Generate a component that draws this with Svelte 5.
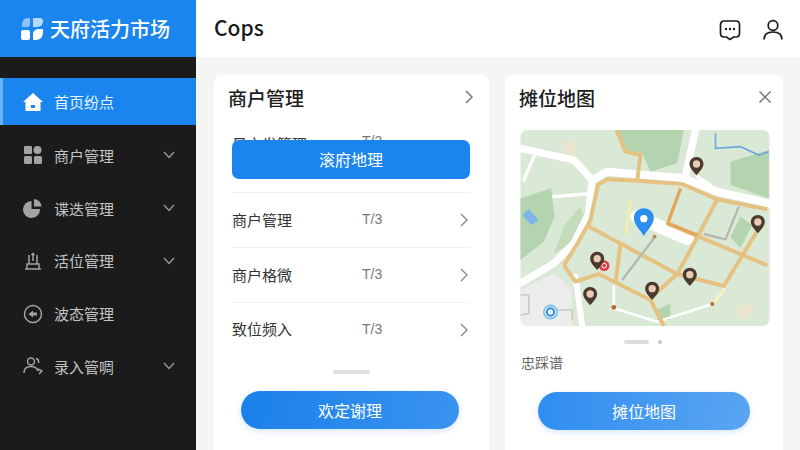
<script>
	const navItems = [
		{ label: '商户管理', icon: 'grid', arrow: true },
		{ label: '谍迭管理', icon: 'pie', arrow: true },
		{ label: '活位管理', icon: 'stall', arrow: true },
		{ label: '波态管理', icon: 'back', arrow: false },
		{ label: '录入管啁', icon: 'users', arrow: true }
	];

	const rows = [
		{ label: '商户管理', value: 'T/3' },
		{ label: '商户格微', value: 'T/3' },
		{ label: '致位频入', value: 'T/3' }
	];

	// map coordinates, same scale for every overlay
	const brownPins = [
		[558, 138],
		[742, 312],
		[260, 422],
		[538, 470],
		[425, 512],
		[239, 528]
	];

	const routes = [
		'M160 436 L200 372 L240 300 L262 195 L290 178 L380 182 L515 192 L620 238 L770 268',
		'M232 318 L500 462 L640 498 L742 330',
		'M160 436 L195 485 L265 462 L420 540 L460 618',
		'M470 310 L770 436',
		'M620 238 L540 390 L500 462 L425 530',
		'M330 370 L315 490',
		'M380 182 L390 105 L345 95 L318 30'
	];
</script>

<div class="app">
	<aside class="sidebar">
		<div class="brand">
			<svg class="logo" viewBox="0 0 22 23" width="22" height="23">
				<path d="M1 8c0-4 2-7 6-7h2v6c0 2-1 3-3 3H1z" fill="#8cc4f5" />
				<path d="M12 1h7c2 0 3 1 3 3 0 3-2 6-6 6h-4z" fill="#b5daf8" />
				<rect x="0" y="13" width="9" height="10" rx="2" fill="#fff" />
				<path d="M12 23V17c0-3 3-5 6-5h4v3c0 5-3 8-7 8z" fill="#fff" />
			</svg>
			<span>天府活力市场</span>
		</div>

		<nav>
			<a class="item active" href="#home">
				<svg viewBox="0 0 20 20" width="20" height="20">
					<path
						d="M10 1 L20 10 L17.5 10 L17.5 19 L2.500 19 L2.500 10 L0 10 Z M8 13 V16 H12 V13 Z"
						fill="#fff"
						fill-rule="evenodd"
					/>
				</svg>
				<span>首页纷点</span>
			</a>
			{#each navItems as item}
				<a class="item" href="#item">
					<svg viewBox="0 0 20 20" width="20" height="20" class="icon">
						{#if item.icon === 'grid'}
							<rect x="1" y="1" width="8" height="8" rx="1" fill="currentColor" />
							<circle cx="14.500" cy="5" r="4" fill="currentColor" />
							<rect x="1" y="11" width="8" height="8" rx="1.500" fill="currentColor" />
							<rect x="11" y="11" width="8" height="8" rx="1.500" fill="currentColor" />
						{:else if item.icon === 'pie'}
							<path d="M8.500 3 V11 H17 A8.500 8.500 0 1 1 8.500 3 Z" fill="currentColor" />
							<path d="M11 1 A8 8 0 0 1 18.500 8.500 H11 Z" fill="currentColor" />
						{:else if item.icon === 'stall'}
							<path
								d="M2 18 H18 M4 18 V13 H16 V18 M6 13 V4 M14 13 V4 M10 10 V3 M8.500 4 L10 2.500 L11.500 4"
								fill="none"
								stroke="currentColor"
								stroke-width="1.500"
							/>
						{:else if item.icon === 'back'}
							<circle cx="10" cy="10" r="8.500" fill="none" stroke="currentColor" stroke-width="1.500" />
							<path d="M5.500 10 L10 6.500 V8.500 H14 V11.500 H10 V13.500 Z" fill="currentColor" />
						{:else}
							<circle cx="8" cy="5.500" r="3.500" fill="none" stroke="currentColor" stroke-width="1.500" />
							<path
								d="M1 17 C1 12 4 10.500 8 10.500 C12 10.500 14 12 15 15 M13 2.500 C15 3 16 4.500 15.500 7 M15 13 L19 15 L16 18"
								fill="none"
								stroke="currentColor"
								stroke-width="1.500"
							/>
						{/if}
					</svg>
					<span>{item.label}</span>
					{#if item.arrow}
						<svg class="chevron" viewBox="0 0 12 8" width="12" height="8">
							<path d="M1 1 L6 6.500 L11 1" fill="none" stroke="currentColor" stroke-width="1.300" />
						</svg>
					{/if}
				</a>
			{/each}
		</nav>
	</aside>

	<div class="main">
		<header>
			<h1>Cops</h1>
			<div class="actions">
				<svg viewBox="0 0 22 22" width="22" height="22">
					<path
						d="M5 2 H17 C19 2 20.500 3.500 20.500 6 V14 C20.500 16.500 19 18 17 18 H14.500 L11 20.500 L7.500 18 H5 C3 18 1.500 16.500 1.500 14 V6 C1.500 3.500 3 2 5 2 Z"
						fill="none"
						stroke="#1a1a1a"
						stroke-width="1.700"
					/>
					<circle cx="7" cy="10" r="1.200" fill="#1a1a1a" />
					<circle cx="11" cy="10" r="1.200" fill="#1a1a1a" />
					<circle cx="15" cy="10" r="1.200" fill="#1a1a1a" />
				</svg>
				<svg viewBox="0 0 22 22" width="22" height="22">
					<circle cx="11" cy="6.500" r="4.800" fill="none" stroke="#1a1a1a" stroke-width="1.700" />
					<path
						d="M2 20.500 C2 15.500 5.500 13 11 13 C16.500 13 20 15.500 20 20.500"
						fill="none"
						stroke="#1a1a1a"
						stroke-width="1.700"
					/>
				</svg>
			</div>
		</header>

		<div class="content">
			<section class="card">
				<div class="card-head">
					<h2>商户管理</h2>
					<svg viewBox="0 0 10 14" width="10" height="14">
						<path d="M2 1 L8 7 L2 13" fill="none" stroke="#777" stroke-width="1.500" />
					</svg>
				</div>

				<div class="list">
					<div class="row first">
						<span class="name">日市发管理</span>
						<span class="value">T/3</span>
					</div>
					<button class="float-btn">滚府地理</button>
					{#each rows as row}
						<div class="row">
							<span class="name">{row.label}</span>
							<span class="value">{row.value}</span>
							<svg viewBox="0 0 10 14" width="10" height="14">
								<path d="M2 1 L8 7 L2 13" fill="none" stroke="#8a8a8a" stroke-width="1.400" />
							</svg>
						</div>
					{/each}
				</div>

				<div class="dots"><i class="pill"></i></div>
				<button class="cta left">欢定谢理</button>
			</section>

			<section class="card">
				<div class="card-head map-head">
					<h2>摊位地图</h2>
					<svg viewBox="0 0 14 14" width="14" height="14">
						<path d="M1.500 1.500 L12.500 12.500 M12.500 1.500 L1.500 12.500" fill="none" stroke="#777" stroke-width="1.500" />
					</svg>
				</div>

				<svg class="map" viewBox="30 30 747 588" width="250" height="196">
					<rect x="30" y="30" width="747" height="588" fill="#d9e9d5" />
					<path d="M240 30 H520 L500 130 L420 155 L395 100 L340 95 L315 30 Z" fill="#b3d4ae" />
					<path d="M660 125 L775 90 V235 L660 195 Z" fill="#b3d4ae" />
					<path d="M30 235 L122 205 L132 290 L100 365 L30 420 Z" fill="#b3d4ae" />
					<path d="M130 400 L165 310 L210 260 L225 300 L190 370 Z" fill="#c3dcbc" />
					<path d="M660 350 L690 290 L725 315 L690 385 Z" fill="#b3d4ae" />
					<path d="M440 570 L480 550 L480 600 L440 600 Z" fill="#b3d4ae" />
					<rect x="160" y="65" width="35" height="55" fill="#e9e6cd" />
					<path d="M670 570 L710 545 L735 570 L700 605 Z" fill="#e8e6cc" />
					<path d="M35 285 L55 268 L85 300 L62 315 Z" fill="#7eb6ea" />
					<path d="M615 40 V85 L690 80 L745 105 L775 95" fill="none" stroke="#6fa8e0" stroke-width="5" />
					<path d="M30 510 L130 460 L185 510 V618 H30 Z" fill="#ececec" />
					<path d="M140 570 H185 V600 M30 525 H55 V580 L30 585" fill="none" stroke="#c9c9c9" stroke-width="5" />

					<g fill="none" stroke="#fff" stroke-linejoin="round" stroke-linecap="round">
						<path stroke-width="22" d="M30 85 L190 120 L245 180 L235 280 L190 370 L130 430 L30 490" />
						<path stroke-width="24" d="M245 180 L290 155 L520 175 L620 215 L775 250" />
						<path stroke-width="22" d="M555 30 L525 170" />
						<path stroke-width="10" d="M40 180 L70 110 M130 230 L225 222 M560 170 L600 195" />
						<path stroke-width="18" d="M195 470 L215 618" />
						<path stroke-width="8" d="M310 565 L440 605 L605 552 L640 510 M310 500 V565" />
						<path stroke-width="40" d="M380 290 L530 355" />
					</g>

					<g fill="none" stroke="#e6c282" stroke-width="12" stroke-linejoin="round">
						{#each routes as d}
							<path {d} />
						{/each}
					</g>
					<path d="M510 205 L472 310 L560 345" fill="none" stroke="#e3a45c" stroke-width="10" />
					<path d="M335 480 L430 355 M580 342 L645 358 L685 260" fill="none" stroke="#b9b5b0" stroke-width="7" />
					<path d="M345 345 L360 240" fill="none" stroke="#f2edb0" stroke-width="9" />
					<path d="M610 548 L640 510" fill="none" stroke="#f5f0b8" stroke-width="10" />
					<circle cx="310" cy="562" r="7" fill="#b5643a" />
					<circle cx="605" cy="552" r="6" fill="#b5643a" />
					<circle cx="432" cy="350" r="6" fill="#b58a60" />

					<circle cx="120" cy="576" r="20" fill="none" stroke="#7cc0ea" stroke-width="5" />
					<circle cx="120" cy="576" r="11" fill="none" stroke="#2f8fe0" stroke-width="6" />

					<circle cx="281" cy="437" r="16" fill="#e33b45" />
					<circle cx="281" cy="437" r="7" fill="none" stroke="#fff" stroke-width="3" />

					{#each brownPins as [x, y]}
						<g transform="translate({x} {y})">
							<path d="M0 -27 C12 -27 21 -18 21 -6 C21 6 8 18 0 28 C-8 18 -21 6 -21 -6 C-21 -18 -12 -27 0 -27 Z" fill="#4b3a2d" />
							<circle cx="0" cy="-6" r="11" fill="#e8cdb4" />
						</g>
					{/each}

					<g transform="translate(400 305)">
						<path d="M0 -40 C17 -40 30 -27 30 -10 C30 8 10 26 0 43 C-10 26 -30 8 -30 -10 C-30 -27 -17 -40 0 -40 Z" fill="#2a8df0" />
						<circle cx="0" cy="-9" r="11" fill="#fff" />
					</g>
				</svg>

				<div class="dots map-dots"><i class="pill"></i><i class="dot"></i></div>
				<p class="caption">忠踩谱</p>
				<button class="cta right">摊位地图</button>
			</section>
		</div>
	</div>
</div>

<style>
	:global(body) {
		margin: 0;
		background: #f5f5f4;
	}

	.app {
		display: grid;
		grid-template-columns: 196px 1fr;
		width: 800px;
		height: 450px;
		overflow: hidden;
		font-family: 'Noto Sans CJK SC', 'Noto Sans', sans-serif;
	}

	.sidebar {
		background: #1b1b1c;
		display: flex;
		flex-direction: column;
	}

	.brand {
		height: 57px;
		background: #1a85ee;
		color: #fff;
		display: flex;
		align-items: center;
		gap: 7px;
		padding-left: 21px;
		font-size: 20px;
		font-weight: 500;
	}

	nav {
		margin-top: 21px;
		display: flex;
		flex-direction: column;
	}

	.item {
		height: 52.75px;
		display: flex;
		align-items: center;
		padding: 0 21px 0 23px;
		color: #c4c4c4;
		font-size: 15px;
		text-decoration: none;
	}

	.item span {
		margin-left: 11px;
	}

	.item .icon {
		color: #a3a3a3;
	}

	.item.active {
		height: 47px;
		margin-bottom: 4px;
		background: #1a85ee;
		border-left: 3px solid #6ab2f6;
		padding-left: 20px;
		color: #e8f3fe;
	}

	.chevron {
		margin-left: auto;
		color: #9a9a9a;
	}

	.main {
		display: flex;
		flex-direction: column;
		min-width: 0;
	}

	header {
		height: 57px;
		background: #fff;
		display: flex;
		align-items: center;
		justify-content: space-between;
		padding: 0 16px 0 18px;
	}

	h1 {
		margin: 0 0 3px;
		font-size: 21px;
		font-weight: 500;
		color: #1a1a1a;
	}

	.actions {
		display: flex;
		gap: 21px;
		padding-top: 2px;
	}

	.content {
		display: grid;
		grid-template-columns: 275px 278px;
		gap: 16px;
		padding: 18px 0 0 18px;
		height: 375px;
	}

	.card {
		background: #fff;
		border-radius: 7px 7px 0 0;
		padding: 0 14px;
		display: flex;
		flex-direction: column;
		align-items: stretch;
		height: 375px;
	}

	.card-head {
		height: 46px;
		padding: 0 1px 2px 0;
		box-sizing: border-box;
		display: flex;
		align-items: center;
		justify-content: space-between;
		flex-shrink: 0;
	}

	.map-head {
		height: 55px;
		padding: 0 0 11px 0;
		margin-right: -3px;
	}

	h2 {
		margin: 0;
		font-size: 19px;
		font-weight: 500;
		color: #1c1c1c;
	}

	.list {
		position: relative;
		margin: 0 5px 0 4px;
	}

	.row {
		height: 55px;
		box-sizing: border-box;
		display: flex;
		align-items: center;
		border-bottom: 1px solid #f1f1f1;
		font-size: 15px;
		color: #333;
		padding-bottom: 2px;
	}

	.row:last-child {
		border-bottom: 0;
		padding-bottom: 4px;
	}

	.row.first {
		height: 72px;
		align-items: flex-start;
		padding-top: 12px;
	}

	.row svg {
		margin: 2px 1px 0 0;
	}

	.name {
		width: 130px;
	}

	.value {
		color: #777;
		font-size: 14px;
		flex: 1;
		font-family: 'Liberation Sans', sans-serif;
	}

	.float-btn {
		position: absolute;
		top: 19px;
		left: 0;
		width: 238px;
		height: 39px;
		border: 0;
		border-radius: 7px;
		background: #1a85ee;
		color: #fff;
		font: inherit;
		font-size: 16px;
		padding-bottom: 3px;
	}

	.dots {
		display: flex;
		justify-content: center;
		align-items: center;
		gap: 8px;
	}

	.list + .dots {
		margin-top: 12px;
	}

	.pill {
		width: 37px;
		height: 4px;
		border-radius: 2px;
		background: #dedede;
	}

	.dot {
		width: 4px;
		height: 4px;
		border-radius: 50%;
		background: #c8c8c8;
	}

	.cta {
		flex-shrink: 0;
		height: 38px;
		border: 0;
		border-radius: 19px;
		color: #fff;
		font: inherit;
		font-size: 16px;
		box-shadow: 0 2px 6px rgba(30, 130, 235, 0.2);
	}

	.cta.left {
		margin: 17px 16px 0 13px;
		background: linear-gradient(100deg, #1a80ea, #3a93ef);
	}

	.map {
		display: block;
		flex-shrink: 0;
		margin-left: 1px;
		border-radius: 8px;
	}

	.map-dots {
		margin-top: 14px;
		gap: 9px;
		padding-right: 3px;
	}

	.map-dots .pill {
		width: 25px;
	}

	.caption {
		margin: 8px 0 0 2px;
		font-size: 14px;
		line-height: 20px;
		color: #666;
	}

	.cta.right {
		margin: 20px 19px 0 19px;
		background: linear-gradient(100deg, #2f8df0, #5aa5f2);
	}
</style>
